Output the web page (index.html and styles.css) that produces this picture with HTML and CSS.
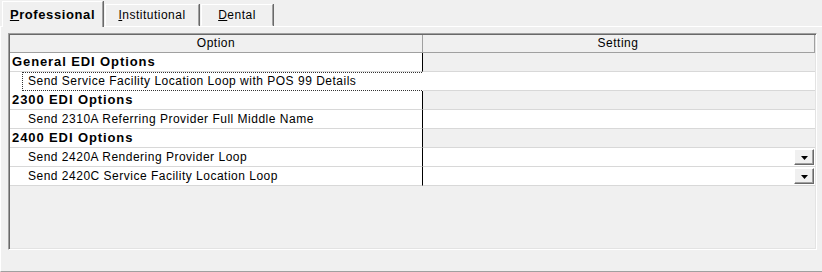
FILE: index.html
```html
<!DOCTYPE html>
<html>
<head>
    <meta charset="UTF-8">
    <title>EDI Options</title>
    <link rel="stylesheet" href="styles.css">
</head>
<body>
    <div class="tabs">
        <div class="tab active"><u>P</u>rofessional</div>
        <div class="tab tab-inst"><u>I</u>nstitutional</div>
        <div class="tab tab-dental"><u>D</u>ental</div>
    </div>
    <div class="panel">
        <div class="grid">
            <div class="row head">
                <div class="cell opt">Option</div>
                <div class="cell set">Setting</div>
            </div>
            <div class="row cat">
                <div class="cell opt"><span class="label">General EDI Options</span></div>
                <div class="cell set"></div>
            </div>
            <div class="row item focus">
                <div class="cell opt"><span class="label">Send Service Facility Location Loop with POS 99 Details</span></div>
                <div class="cell set"></div>
            </div>
            <div class="row cat">
                <div class="cell opt"><span class="label">2300 EDI Options</span></div>
                <div class="cell set"></div>
            </div>
            <div class="row item">
                <div class="cell opt"><span class="label">Send 2310A Referring Provider Full Middle Name</span></div>
                <div class="cell set"></div>
            </div>
            <div class="row cat">
                <div class="cell opt"><span class="label">2400 EDI Options</span></div>
                <div class="cell set"></div>
            </div>
            <div class="row item">
                <div class="cell opt"><span class="label">Send 2420A Rendering Provider Loop</span></div>
                <div class="cell set">
                    <span class="drop"><svg width="7" height="4" viewBox="0 0 7 4"><polygon points="0,0 7,0 3.5,4" fill="#000"/></svg></span>
                </div>
            </div>
            <div class="row item">
                <div class="cell opt"><span class="label">Send 2420C Service Facility Location Loop</span></div>
                <div class="cell set">
                    <span class="drop"><svg width="7" height="4" viewBox="0 0 7 4"><polygon points="0,0 7,0 3.5,4" fill="#000"/></svg></span>
                </div>
            </div>
        </div>
    </div>
</body>
</html>
```

FILE: styles.css
```css
/* WinForms look: tab control with a property grid */
* {
    box-sizing: border-box;
}
body {
    margin: 0;
    background-color: #f0f0f0;
    font-family: "Liberation Sans", Arial, sans-serif;
    font-size: 12px;
    letter-spacing: 0.5px;
    color: #000;
}
u {
    text-decoration: underline;
    text-underline-offset: 1px;
}

/* tabs */
.tabs {
    display: flex;
    align-items: flex-end;
    height: 26px;
    padding-left: 2px;
}
.tab {
    height: 22px;
    line-height: 20px;
    text-align: center;
    border: 1px solid;
    border-color: #fff #a0a0a0 transparent #fff;
    box-shadow: 1px 0 0 #696969;
    background-color: #f0f0f0;
}
.tab.active {
    position: relative;
    z-index: 1;
    width: 101px;
    height: 26px;
    margin-bottom: -1px;
    padding-top: 3px;
    font-weight: bold;
    font-size: 13px;
    letter-spacing: 0.6px;
    border-bottom: none;
}
.tab-inst {
    width: 94px;
    margin-left: 2px;
}
.tab-dental {
    width: 72px;
    margin-left: 2px;
}

/* tab page */
.panel {
    height: 246px;
    border-top: 1px solid #fff;
    border-left: 1px solid #fff;
    border-bottom: 1px solid #a0a0a0;
    box-shadow: 0 1px 0 #696969;
    padding: 6px 5px 0 7px;
}

/* grid */
.grid {
    width: 809px;
    height: 217px;
    border: 1px solid;
    border-color: #a0a0a0 #fff #fff #a0a0a0;
    box-shadow: inset 1px 1px 0 #696969, inset -1px -1px 0 #e3e3e3;
    padding: 1px;
    background-color: #f0f0f0;
}
.row {
    display: grid;
    grid-template-columns: 413px 1fr;
    height: 19px;
}
.cell {
    height: 19px;
    line-height: 18px;
    border-bottom: 1px solid #d8d8d8;
    white-space: nowrap;
    overflow: hidden;
}
.opt {
    background-color: #fff;
    border-right: 1px solid #000;
}
.set {
    background-color: #fff;
    display: flex;
    justify-content: flex-end;
    align-items: center;
    padding-right: 1px;
}

.head {
    height: 18px;
}
.head .cell {
    height: 18px;
    line-height: 17px;
    text-align: center;
    background-color: #f0f0f0;
    border-bottom: 1px solid #a0a0a0;
    border-right: 1px solid #a0a0a0;
    display: block;
}

.cat .opt {
    padding-left: 2px;
    font-weight: bold;
    font-size: 13px;
    letter-spacing: 0.9px;
}
.cat .set {
    background-color: #f0f0f0;
}

.item .opt {
    padding-left: 12px;
}
.item .label {
    display: block;
    height: 18px;
    padding-left: 5px;
    border: 1px solid transparent;
    line-height: 16px;
}
.focus .opt {
    border-right: none;
    border-bottom: none;
    width: 414px;
}
.focus .label {
    height: 19px;
    line-height: 17px;
    border: 1px dotted #333;
}

/* combo button */
.drop {
    width: 20px;
    height: 16px;
    display: flex;
    align-items: center;
    justify-content: center;
    padding-top: 2px;
    background-color: #f0f0f0;
    border: 1px solid;
    border-color: #fff #696969 #696969 #fff;
    box-shadow: inset -1px -1px 0 #a0a0a0;
}
```
